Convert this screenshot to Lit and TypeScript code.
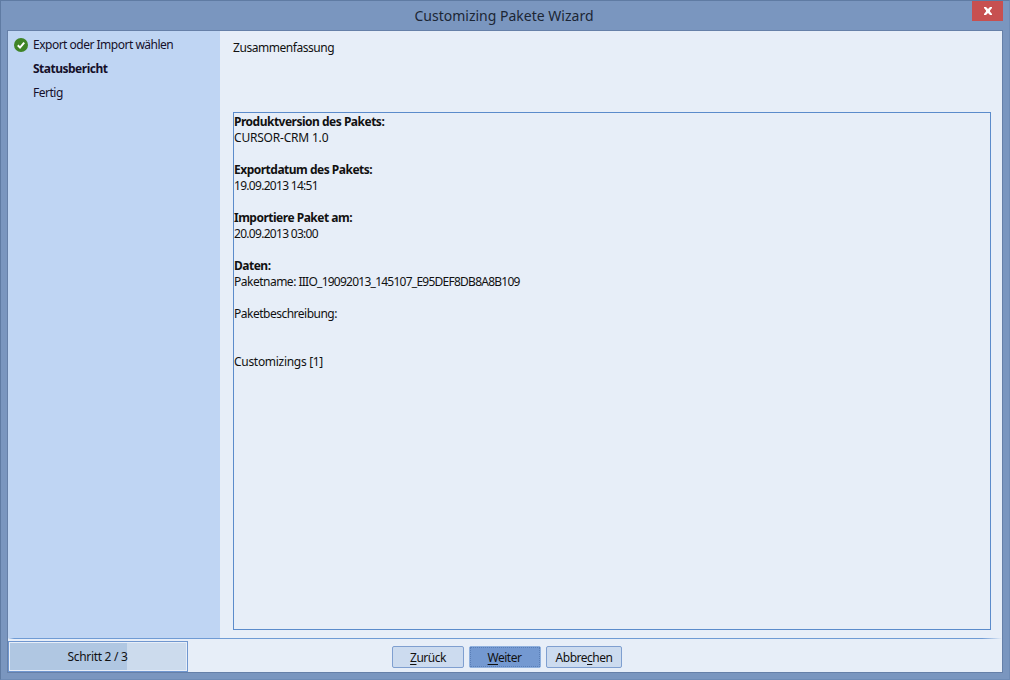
import { LitElement, html, css } from "lit";
import { customElement } from "lit/decorators.js";

@customElement("app-root")
export class AppRoot extends LitElement {
  static styles = css`
    :host { display: block; width: 1010px; height: 680px; }
    * { box-sizing: border-box; }
    .window {
      width: 1010px; height: 680px; background: #7a96bf;
      border: 1px solid #5f7ba3; border-right-color: #6f8cb6; border-bottom-color: #6f8cb6;
      display: flex; flex-direction: column;
      font: 12px "Noto Sans", "Open Sans", sans-serif; color: #111;
      letter-spacing: -0.5px;
    }
    .titlebar { height: 29px; flex: none; display: flex; position: relative; justify-content: center; padding: 7px 2px 0 0; }
    .title { font-size: 14px; line-height: 16px; color: #1c2635; letter-spacing: 0; }
    .close {
      position: absolute; right: 6px; top: 0; width: 31px; height: 20px; background: #c75050;
      display: flex; align-items: center; justify-content: center;
    }
    .client {
      flex: none; height: 643px; width: 996px; margin: 0 6px; background: #e7eef8;
      border: 1px solid #6680a8;
      display: flex; flex-direction: column;
    }
    .main { flex: none; height: 607px; display: flex; }
    .side { width: 212px; background: #bfd5f3; padding-top: 2px; flex: none; }
    .step { height: 24px; display: flex; align-items: center; padding-left: 25px; position: relative; line-height: 16px; color: #15102a; }
    .step.active { font-weight: 700; }
    .icon { position: absolute; left: 6px; top: 5px; }
    .content { flex: 1; padding: 8px 11px 8px 13px; display: flex; flex-direction: column; }
    .head { height: 73px; flex: none; line-height: 16px; padding-top: 1px; letter-spacing: -0.45px; }
    .box { flex: 1; border: 1px solid #5b8bcb; padding: 1px 0 0 0; }
    .line { height: 16px; line-height: 16px; white-space: pre; }
    .line.loose { letter-spacing: -0.2px; }
    .line.custom { letter-spacing: -0.3px; }
    .line.date { letter-spacing: -0.7px; }
    .label { letter-spacing: -0.5px; }
    .code { letter-spacing: -0.75px; }
    .bold { font-weight: 700; }
    .sep { height: 1px; background: linear-gradient(to right, #dfe9f6 0, #6f9bd4 6px, #6f9bd4 98%, #e7eef8 100%); flex: none; }
    .footer { height: 33px; flex: none; display: flex; position: relative; }
    .status {
      width: 180px; height: 31px; margin-top: 2px; border: 1px solid #6f96cf; padding: 1px;
      background: #e7eef8; flex: none;
    }
    .status-in {
      height: 100%; display: flex; justify-content: center; align-items: center; background: linear-gradient(to right, #b0c7e2 0, #b0c7e2 117px, #ccdbed 117px);
      color: #111; letter-spacing: -0.3px; padding-right: 1px;
    }
    .buttons { display: flex; gap: 5px; position: absolute; left: 384px; top: 7px; }
    button {
      font: inherit; letter-spacing: inherit; height: 22px; border: 1px solid #7f9fd0; border-radius: 2px; background: #ccdbef; color: #111;
      padding: 0; display: flex; align-items: center; justify-content: center;
    }
    button u { text-underline-offset: 2px; }
    .b1 { width: 72px; }
    .b2 { width: 72px; background: #7499d1; border-color: #8fb0de; outline: 1px dotted #5a7fb8; outline-offset: -2px; padding-right: 1px; }
    .b3 { width: 76px; }
  `;

  render() {
    return html`
      <div class="window">
        <div class="titlebar">
          <span class="title">Customizing Pakete Wizard</span>
          <div class="close">
            <svg width="10" height="8" viewBox="0 0 10 8"><path d="M1 0h2l2 2 2-2h2v1L7 3.5v1L9 7v1H7L5 6 3 8H1V7l2-2.5v-1L1 1z" fill="#fff"/></svg>
          </div>
        </div>
        <div class="client">
          <div class="main">
            <div class="side">
              <div class="step">
                <svg class="icon" width="14" height="14" viewBox="0 0 14 14">
                  <circle cx="7" cy="7" r="7" fill="#3f8427"/>
                  <path d="M3.8 7.3 6 9.6 10.2 4.6" fill="none" stroke="#fff" stroke-width="2"/>
                </svg>
                Export oder Import wählen
              </div>
              <div class="step active">Statusbericht</div>
              <div class="step">Fertig</div>
            </div>
            <div class="content">
              <div class="head">Zusammenfassung</div>
              <div class="box">
                <div class="line bold">Produktversion des Pakets:</div>
                <div class="line loose">CURSOR-CRM 1.0</div>
                <div class="line"> </div>
                <div class="line bold">Exportdatum des Pakets:</div>
                <div class="line date">19.09.2013 14:51</div>
                <div class="line"> </div>
                <div class="line bold">Importiere Paket am:</div>
                <div class="line date">20.09.2013 03:00</div>
                <div class="line"> </div>
                <div class="line bold">Daten:</div>
                <div class="line"><span class="label">Paketname: </span><span class="code">IIIO_19092013_145107_E95DEF8DB8A8B109</span></div>
                <div class="line"> </div>
                <div class="line">Paketbeschreibung:</div>
                <div class="line"> </div>
                <div class="line"> </div>
                <div class="line custom">Customizings [1]</div>
              </div>
            </div>
          </div>
          <div class="sep"></div>
          <div class="footer">
            <div class="status"><div class="status-in">Schritt 2 / 3</div></div>
            <div class="buttons">
              <button class="b1"><span><u>Z</u>urück</span></button>
              <button class="b2"><span><u>W</u>eiter</span></button>
              <button class="b3"><span>Abbre<u>c</u>hen</span></button>
            </div>
          </div>
        </div>
      </div>
    `;
  }
}
